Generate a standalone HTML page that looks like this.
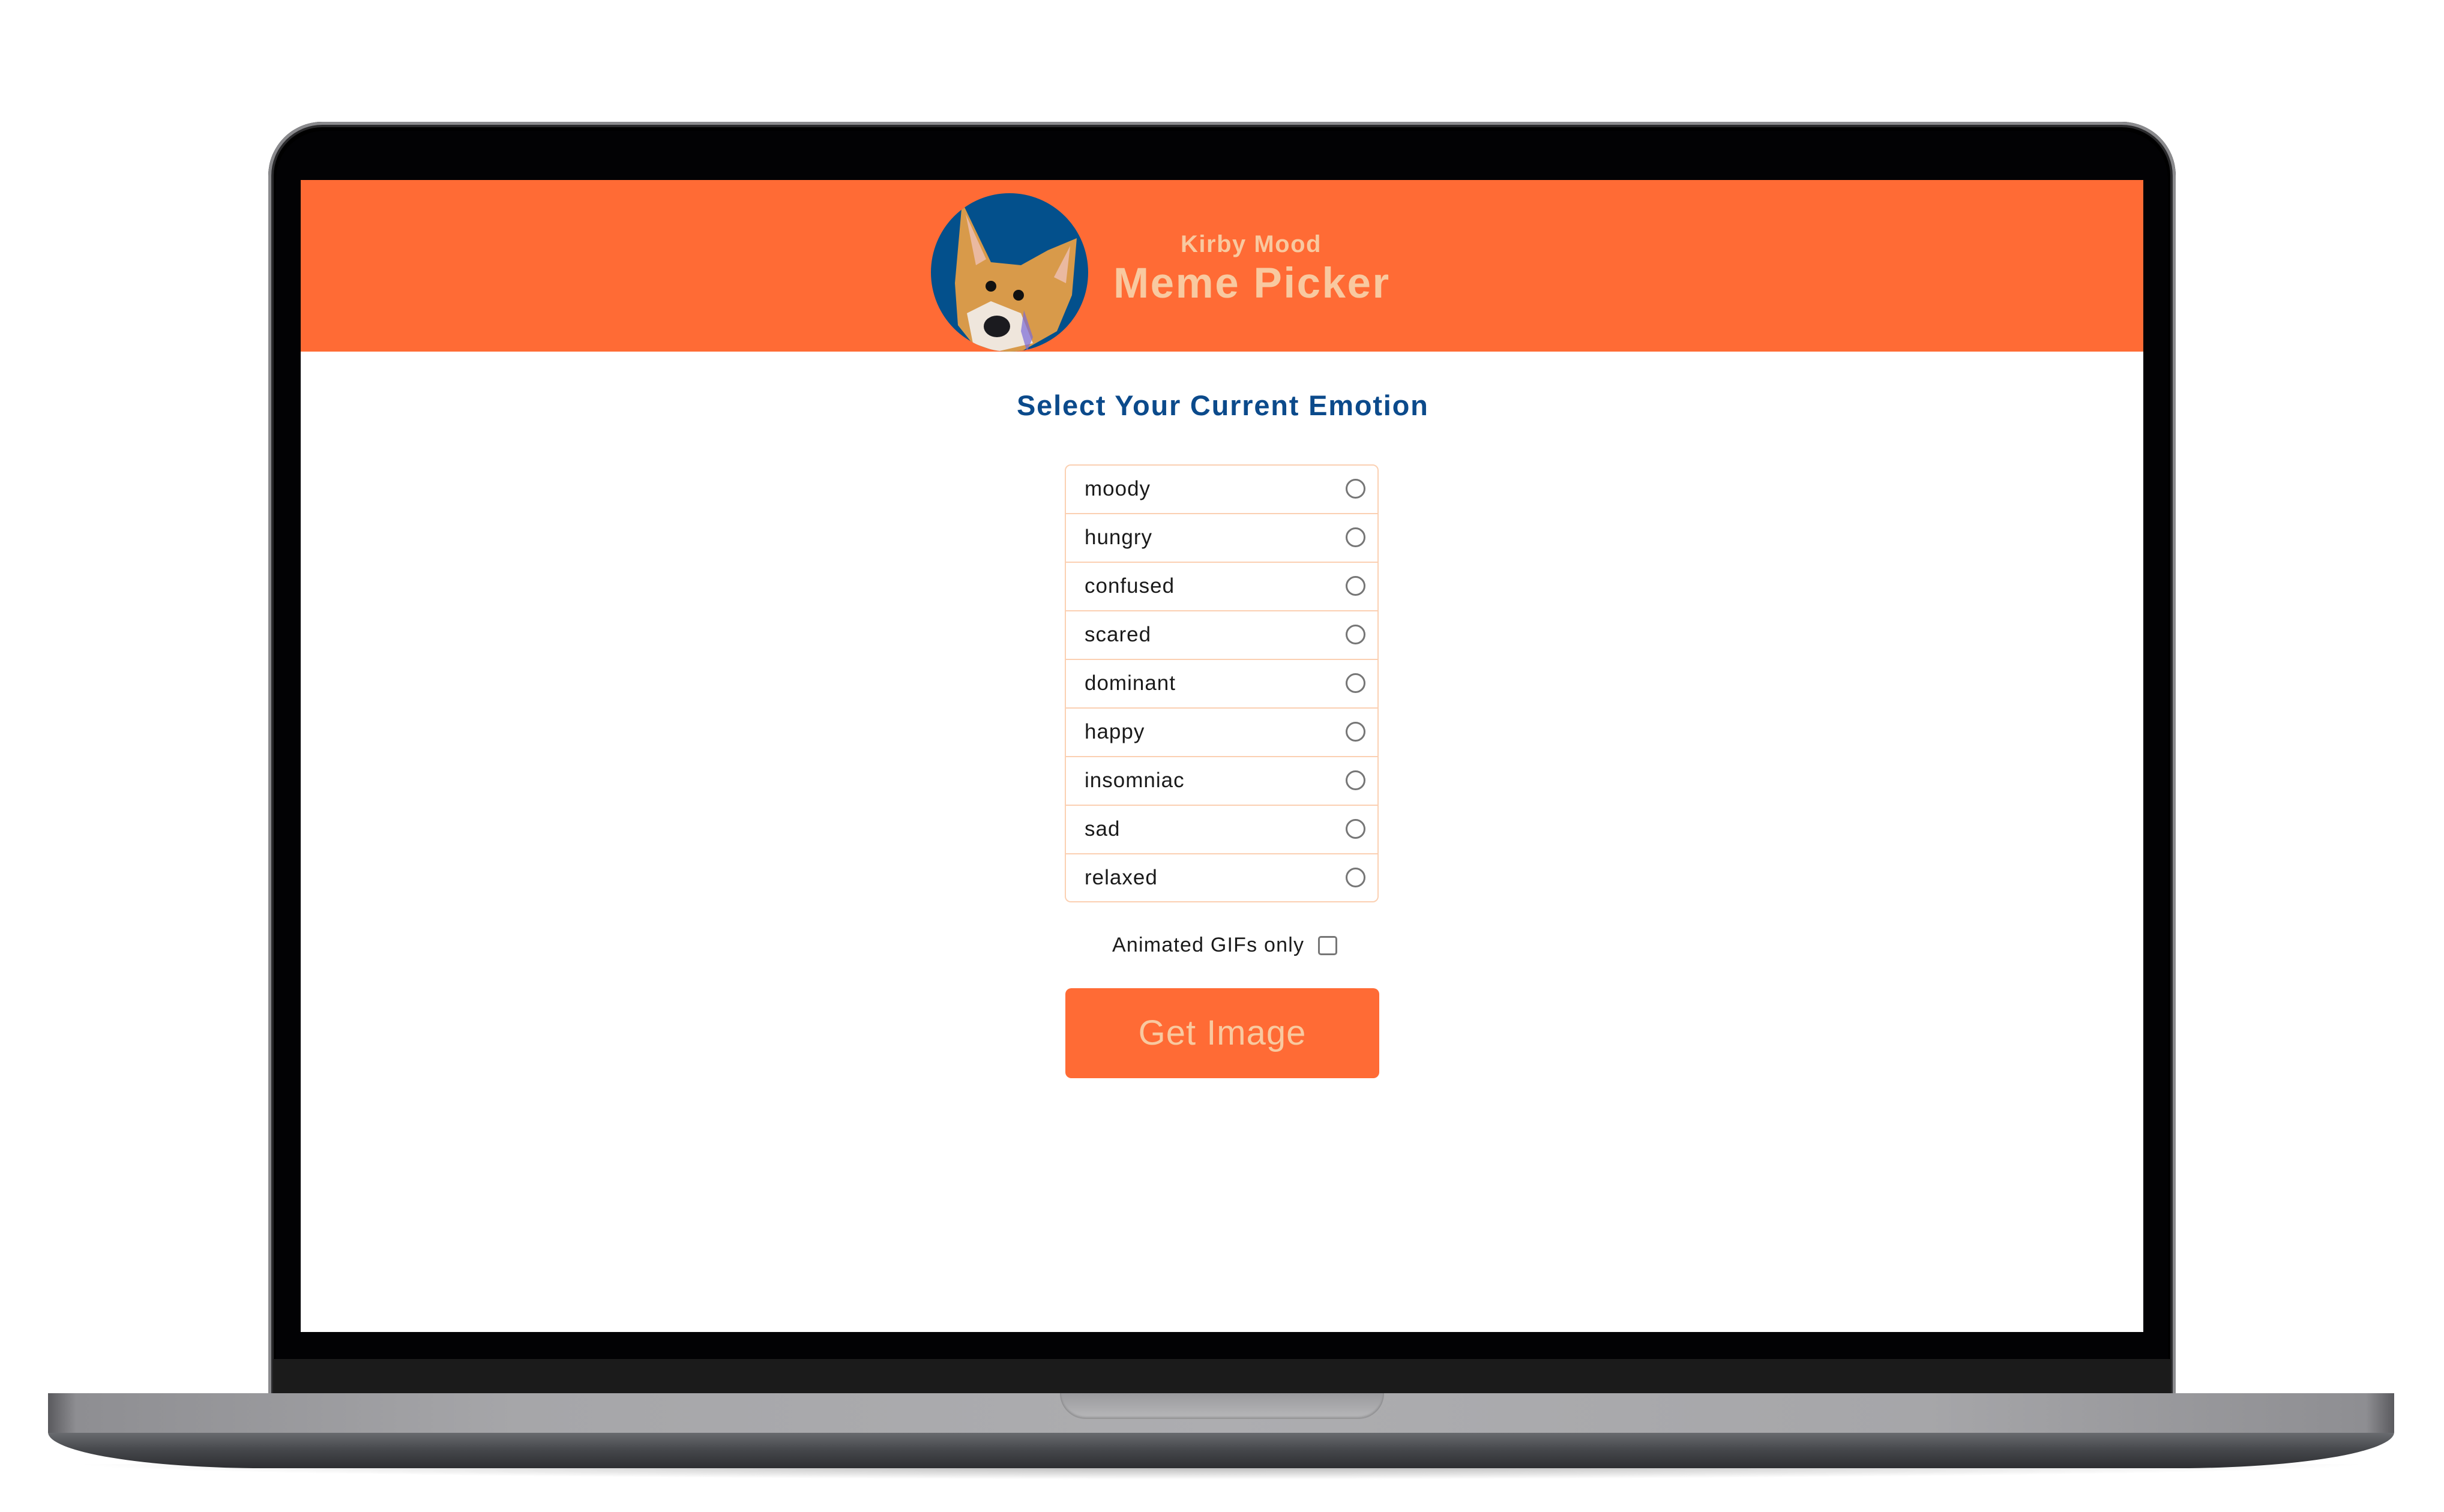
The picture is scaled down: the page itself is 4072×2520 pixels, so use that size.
<!DOCTYPE html>
<html><head><meta charset="utf-8"><style>
html,body{margin:0;padding:0;background:#fff;}
body{width:4072px;height:2520px;position:relative;overflow:hidden;font-family:"Liberation Sans",sans-serif;}
.abs{position:absolute;}
#lid{left:447px;top:203px;width:3178px;height:2125px;background:#000;border-radius:90px 90px 0 0;box-shadow:inset 0 0 0 5px #8a8a8d, inset 0 0 0 9px #2a2a2c;}
#lidinner{left:460px;top:218px;width:3152px;height:2110px;background:#020204;border-radius:80px 80px 0 0;}
#chin{left:455px;top:2265px;width:3162px;height:60px;background:#1b1b1b;}
#screen{left:501px;top:300px;width:3070px;height:1920px;background:#fff;}
#hdr{left:501px;top:300px;width:3070px;height:286px;background:#ff6b35;}
.t1{font-weight:bold;color:#f8c9a0;white-space:nowrap;}
#base{left:80px;top:2322px;width:3909px;height:66px;background:linear-gradient(90deg,#5a5a5e 0,#8e8e92 1.2%,#a6a6a9 20%,#adadb0 50%,#a6a6a9 80%,#8e8e92 98.8%,#5a5a5e 100%);}
#base2{left:80px;top:2387px;width:3909px;height:60px;background:linear-gradient(180deg,#6a6c70,#45474b 50%,#2e2f32);border-radius:0 0 360px 360px / 0 0 60px 60px;}
#notch{left:1766px;top:2322px;width:540px;height:43px;background:linear-gradient(180deg,#9a9a9d,#b8b8ba);border-radius:0 0 60px 60px;box-shadow:inset 0 -3px 3px rgba(0,0,0,.2);}
#shadow{left:110px;top:2440px;width:3850px;height:26px;background:radial-gradient(ellipse at center top,rgba(0,0,0,.35),rgba(0,0,0,0) 70%);}
.list{left:1774px;top:774px;width:523px;height:730px;border:2px solid #fbd0b2;border-radius:10px;box-sizing:border-box;}
.row{position:absolute;left:0;width:100%;height:81px;border-bottom:2px solid #fbd0b2;box-sizing:border-box;}
.row span{position:absolute;left:31px;top:19px;font-size:35px;color:#1a1a1a;letter-spacing:1px;}
.row i{position:absolute;left:466px;top:22px;width:27px;height:27px;border:3px solid #767676;border-radius:50%;}
</style></head><body>
<div id="lid" class="abs"></div>
<div id="lidinner" class="abs"></div>
<div id="chin" class="abs"></div>
<div id="screen" class="abs"></div>
<div id="hdr" class="abs"></div>
<svg class="abs" style="left:1551px;top:322px" width="262" height="264" viewBox="0 0 262 264">
<defs><clipPath id="c"><ellipse cx="131" cy="132" rx="131" ry="132"/></clipPath></defs>
<ellipse cx="131" cy="132" rx="131" ry="132" fill="#03508c"/>
<g clip-path="url(#c)">
<path d="M52 15 L100 115 L150 120 L195 95 L243 75 L235 170 L210 230 L150 264 L80 264 L45 220 L40 150 Z" fill="#d89a4a"/>
<path d="M58 35 L92 110 L75 120 Z" fill="#eab9a0"/>
<path d="M232 88 L205 140 L225 150 Z" fill="#eab9a0"/>
<path d="M60 200 L100 180 L150 200 L170 250 L110 264 L70 250 Z" fill="#efe6dc"/>
<circle cx="100" cy="155" r="9" fill="#111"/>
<circle cx="146" cy="170" r="9" fill="#111"/>
<ellipse cx="110" cy="222" rx="22" ry="18" fill="#1b1b1f"/>
<path d="M155 195 L170 240 L160 264 L150 230 Z" fill="#7a6ad8" opacity=".7"/>
</g></svg>
<div class="abs t1" style="left:1967px;top:385px;font-size:40px;letter-spacing:1.5px;">Kirby Mood</div>
<div class="abs t1" style="left:1855px;top:432px;font-size:71px;letter-spacing:2.5px;">Meme Picker</div>
<div class="abs" style="left:1694px;top:648px;font-size:47px;font-weight:bold;color:#0b4a8b;white-space:nowrap;letter-spacing:1.8px;">Select Your Current Emotion</div>
<div class="abs list">
<div class="row" style="top:0"><span>moody</span><i></i></div>
<div class="row" style="top:81px"><span>hungry</span><i></i></div>
<div class="row" style="top:162px"><span>confused</span><i></i></div>
<div class="row" style="top:243px"><span>scared</span><i></i></div>
<div class="row" style="top:324px"><span>dominant</span><i></i></div>
<div class="row" style="top:405px"><span>happy</span><i></i></div>
<div class="row" style="top:486px"><span>insomniac</span><i></i></div>
<div class="row" style="top:567px"><span>sad</span><i></i></div>
<div class="row" style="top:648px;border-bottom:none"><span>relaxed</span><i></i></div>
</div>
<div class="abs" style="left:1853px;top:1556px;font-size:34px;color:#1a1a1a;white-space:nowrap;letter-spacing:1.2px;">Animated GIFs only</div>
<div class="abs" style="left:2196px;top:1560px;width:26px;height:26px;border:3px solid #767676;border-radius:5px;"></div>
<div class="abs" style="left:1775px;top:1647px;width:523px;height:150px;background:#ff6b35;border-radius:10px;color:#f8c9a0;font-size:58px;text-align:center;line-height:150px;letter-spacing:1px;">Get Image</div>
<div id="shadow" class="abs"></div>
<div id="base2" class="abs"></div>
<div id="base" class="abs"></div>
<div id="notch" class="abs"></div>
</body></html>
